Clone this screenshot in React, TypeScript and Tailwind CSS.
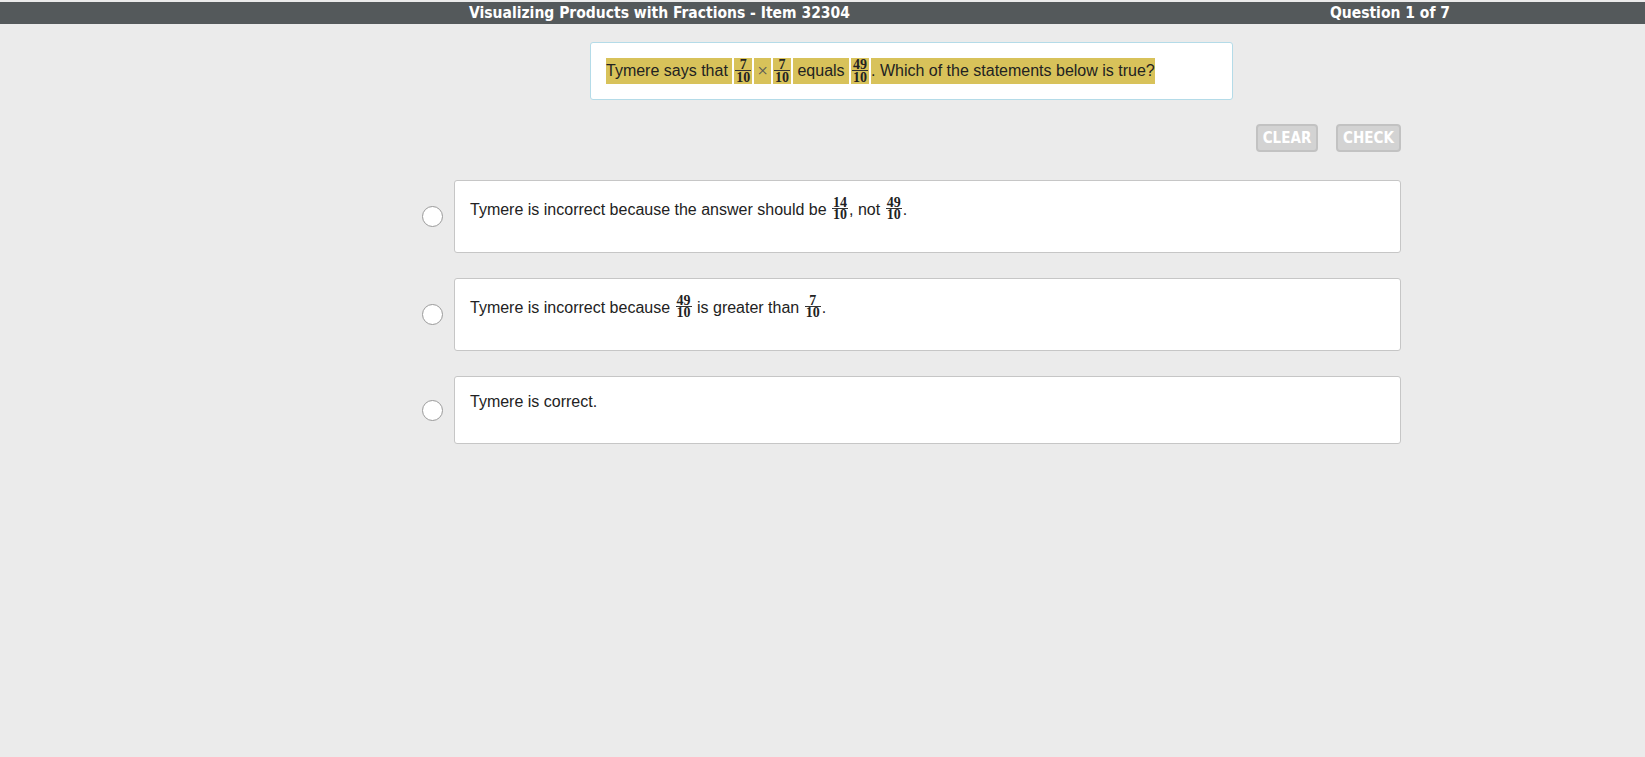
import React from "react";

const narrow = { fontFamily: '"Liberation Sans Narrow", "DejaVu Sans Condensed", Roboto, sans-serif' };
const serif = { fontFamily: '"Liberation Serif", "DejaVu Serif", serif' };

function Frac({ num, den }: { num: string; den: string }) {
  return (
    <span className="inline-block align-[-4px] text-center mx-[1px] font-bold text-[14px]" style={serif}>
      <span className="block leading-[11px] px-[1px]">{num}</span>
      <span className="block leading-[10px] px-[1px] pt-[1px] border-t border-[#333]">{den}</span>
    </span>
  );
}

function QFrac({ num, den }: { num: string; den: string }) {
  return (
    <span className="flex items-center bg-[#d8c25a] px-[1px]">
      <span className="inline-block text-center font-bold text-[14px]" style={serif}>
        <span className="block leading-[11px] px-[1px]">{num}</span>
        <span className="block leading-[11px] px-[1px] pt-[1px] border-t border-[#333]">{den}</span>
      </span>
    </span>
  );
}

function Option({ children }: { children: React.ReactNode }) {
  return (
    <div className="flex items-center gap-[11px]">
      <div className="w-[21px] h-[21px] rounded-full bg-white border border-[#9a9a9a] shrink-0" />
      <div className="flex-1 bg-white border border-[#c6c6c6] rounded-[3px] px-[15px] pt-4 pb-4">
        <p className="mb-4 text-[16px] leading-[18px] text-[#222]">{children}</p>
      </div>
    </div>
  );
}

export default function App() {
  return (
    <div className="min-h-[757px] bg-[#ebebeb] pt-[2px]" style={{ fontFamily: '"Liberation Sans", Arial, sans-serif' }}>
      <div className="h-[22px] bg-[#54595b] flex items-center justify-between pl-[469px] pr-[195px] pt-[1px] text-white font-bold text-[15.5px]" style={narrow}>
        <span>Visualizing Products with Fractions - Item 32304</span>
        <span>Question 1 of 7</span>
      </div>

      <div className="ml-[422px] w-[979px]">
        <div className="mx-auto mt-[18px] w-[643px] bg-white border border-[#b4dbe8] rounded-[3px] px-[15px] py-[15px]">
          <div className="flex items-stretch h-[26px] gap-[2px] text-[16px] text-[#222]">
            <span className="flex items-center bg-[#d8c25a] whitespace-pre">Tymere says that </span>
            <QFrac num="7" den="10" />
            <span className="flex items-center bg-[#d8c25a] px-[3px] text-[19px] font-light text-[#555]" style={serif}>×</span>
            <QFrac num="7" den="10" />
            <span className="flex items-center bg-[#d8c25a] whitespace-pre"> equals </span>
            <QFrac num="49" den="10" />
            <span className="flex items-center bg-[#d8c25a] whitespace-pre">. Which of the statements below is true?</span>
          </div>
        </div>

        <div className="flex justify-end gap-[18px] mt-[24px]">
          <button className="w-[62px] h-[28px] rounded-[4px] bg-[#d3d3d3] border-2 border-[#c2c2c2] text-white font-bold text-[15px]" style={narrow}>
            CLEAR
          </button>
          <button className="w-[65px] h-[28px] rounded-[4px] bg-[#d3d3d3] border-2 border-[#c2c2c2] text-white font-bold text-[15px]" style={narrow}>
            CHECK
          </button>
        </div>

        <div className="flex flex-col gap-[25px] mt-[28px]">
          <Option>
            Tymere is incorrect because the answer should be <Frac num="14" den="10" />, not <Frac num="49" den="10" />.
          </Option>
          <Option>
            Tymere is incorrect because <Frac num="49" den="10" /> is greater than <Frac num="7" den="10" />.
          </Option>
          <Option>Tymere is correct.</Option>
        </div>
      </div>
    </div>
  );
}
